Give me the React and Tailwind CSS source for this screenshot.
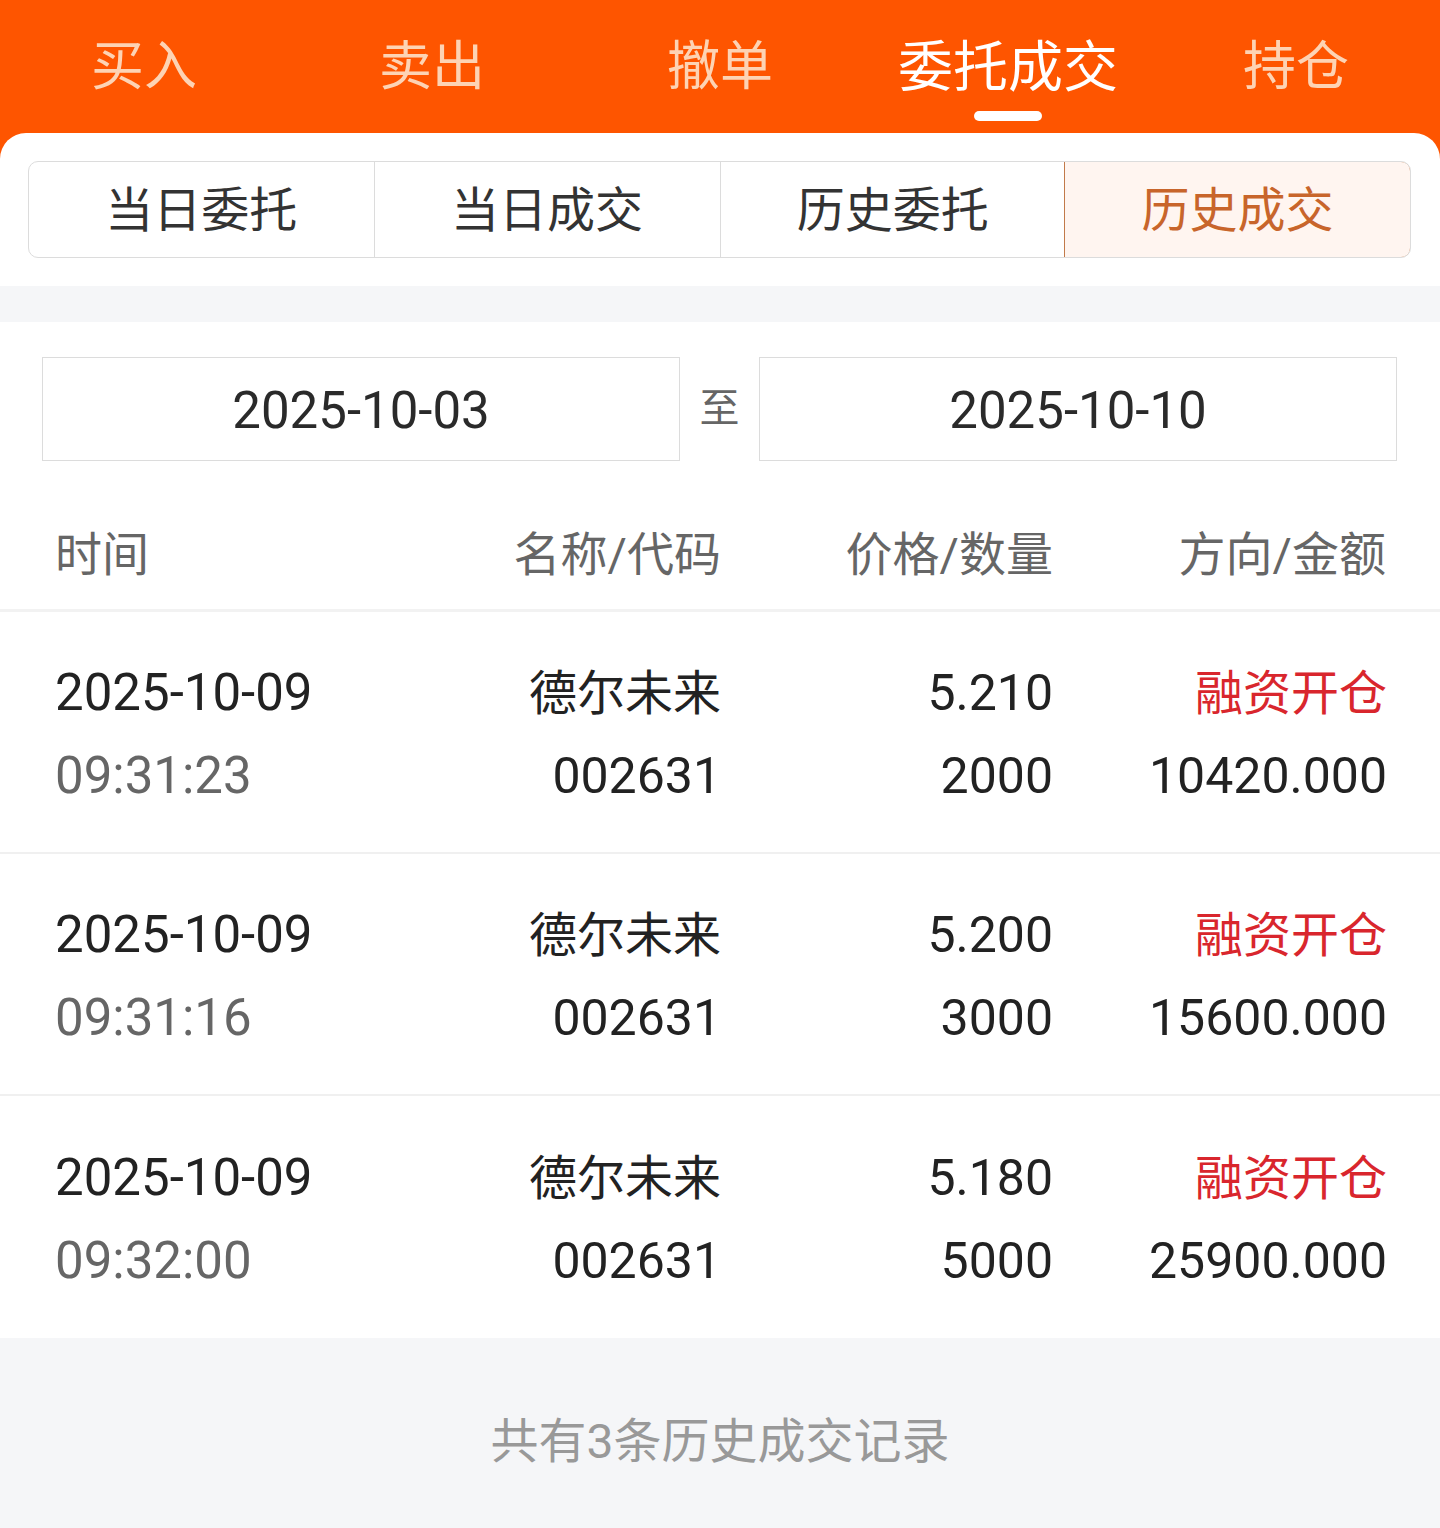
import React from "react";

const FONT = { fontFamily: "Roboto, 'Noto Sans CJK SC', 'Noto Sans', sans-serif" };

const topTabs = ["买入", "卖出", "撤单", "委托成交", "持仓"];
const subTabs = ["当日委托", "当日成交", "历史委托", "历史成交"];
const rows = [
  { date: "2025-10-09", time: "09:31:23", name: "德尔未来", code: "002631", price: "5.210", qty: "2000", dir: "融资开仓", amt: "10420.000" },
  { date: "2025-10-09", time: "09:31:16", name: "德尔未来", code: "002631", price: "5.200", qty: "3000", dir: "融资开仓", amt: "15600.000" },
  { date: "2025-10-09", time: "09:32:00", name: "德尔未来", code: "002631", price: "5.180", qty: "5000", dir: "融资开仓", amt: "25900.000" },
];

export default function App() {
  return (
    <div style={FONT} className="w-[1440px] h-[1528px] overflow-hidden bg-[#f5f6f8]">
      {/* top orange header */}
      <div className="bg-[#fe5500]">
        <div className="grid grid-cols-5 h-[133px]">
          {topTabs.map((t, i) => (
            <div key={t} className="relative flex items-center justify-center">
              <span
                className={
                  i === 3
                    ? "text-[55px] leading-none text-white mt-[2px]"
                    : "text-[53px] leading-none text-[#fdd3b4] mt-[2px]"
                }
              >
                {t}
              </span>
              {i === 3 && (
                <div className="absolute left-1/2 -translate-x-1/2 top-[111px] w-[68px] h-[10px] rounded-full bg-white" />
              )}
            </div>
          ))}
        </div>
        {/* white panel with rounded top */}
        <div className="bg-white rounded-t-[26px] pl-[28px] pt-[28px] pb-[28px] pr-[29px]">
          <div className="flex h-[97px] rounded-[10px] border border-[#dcdcdc] overflow-hidden">
            {subTabs.map((t, i) => (
              <div
                key={t}
                className={
                  i === 3
                    ? "flex-1 flex items-center justify-center bg-[#fff5f0] border border-[#c27a4a] rounded-r-[10px] -m-px text-[#c8652b] text-[48px]"
                    : "flex-1 flex items-center justify-center text-[#333333] text-[48px] " +
                      (i > 0 ? "border-l border-[#dcdcdc]" : "")
                }
              >
                <span className="leading-none mt-[2px]">{t}</span>
              </div>
            ))}
          </div>
        </div>
      </div>

      {/* grey gap */}
      <div className="h-[36px] bg-[#f5f6f8]" />

      {/* date + table */}
      <div className="bg-white">
        <div className="flex items-center pl-[42px] pr-[43px] pt-[35px]">
          <div className="flex-1 h-[104px] border border-[#dcdcdc] flex items-center justify-center text-[51px] text-[#2a2a2a]">
            <span className="leading-none mt-[2px]">2025-10-03</span>
          </div>
          <div className="w-[79px] text-center text-[40px] text-[#666666] leading-none">至</div>
          <div className="flex-1 h-[104px] border border-[#dcdcdc] flex items-center justify-center text-[51px] text-[#2a2a2a]">
            <span className="leading-none mt-[2px]">2025-10-10</span>
          </div>
        </div>

        <div className="mt-[39px] h-[112px] flex items-center text-[47px] text-[#666666] border-b-[3px] border-[#f2f2f2] pl-[55px] pr-[54px]">
          <div className="w-[280px] shrink-0 leading-none">时间</div>
          <div className="w-[386px] shrink-0 text-right leading-none">名称/代码</div>
          <div className="w-[332px] shrink-0 text-right leading-none">价格/数量</div>
          <div className="flex-1 text-right leading-none">方向/金额</div>
        </div>

        {rows.map((r, i) => (
          <div
            key={i}
            className={
              "h-[242px] flex items-center pl-[55px] pr-[53px] pt-[6px] " +
              (i < rows.length - 1 ? "border-b-2 border-[#f0f0f0]" : "")
            }
          >
            <div className="w-[280px] shrink-0">
              <div className="h-[83px] flex items-center text-[51px] text-[#222222]">{r.date}</div>
              <div className="h-[83px] flex items-center text-[51px] text-[#666666]">{r.time}</div>
            </div>
            <div className="w-[386px] shrink-0 text-right">
              <div className="h-[83px] flex items-center justify-end text-[48px] text-[#222222]">{r.name}</div>
              <div className="h-[83px] flex items-center justify-end text-[50px] text-[#222222]">{r.code}</div>
            </div>
            <div className="w-[332px] shrink-0 text-right">
              <div className="h-[83px] flex items-center justify-end text-[50px] text-[#222222]">{r.price}</div>
              <div className="h-[83px] flex items-center justify-end text-[50px] text-[#222222]">{r.qty}</div>
            </div>
            <div className="flex-1 text-right">
              <div className="h-[83px] flex items-center justify-end text-[48px] text-[#d9262d]">{r.dir}</div>
              <div className="h-[83px] flex items-center justify-end text-[50px] text-[#222222]">{r.amt}</div>
            </div>
          </div>
        ))}
      </div>

      {/* footer */}
      <div className="h-[190px] bg-[#f5f6f8] flex justify-center pt-[74px]">
        <span className="text-[48px] leading-[60px] text-[#999999]">共有3条历史成交记录</span>
      </div>
    </div>
  );
}
